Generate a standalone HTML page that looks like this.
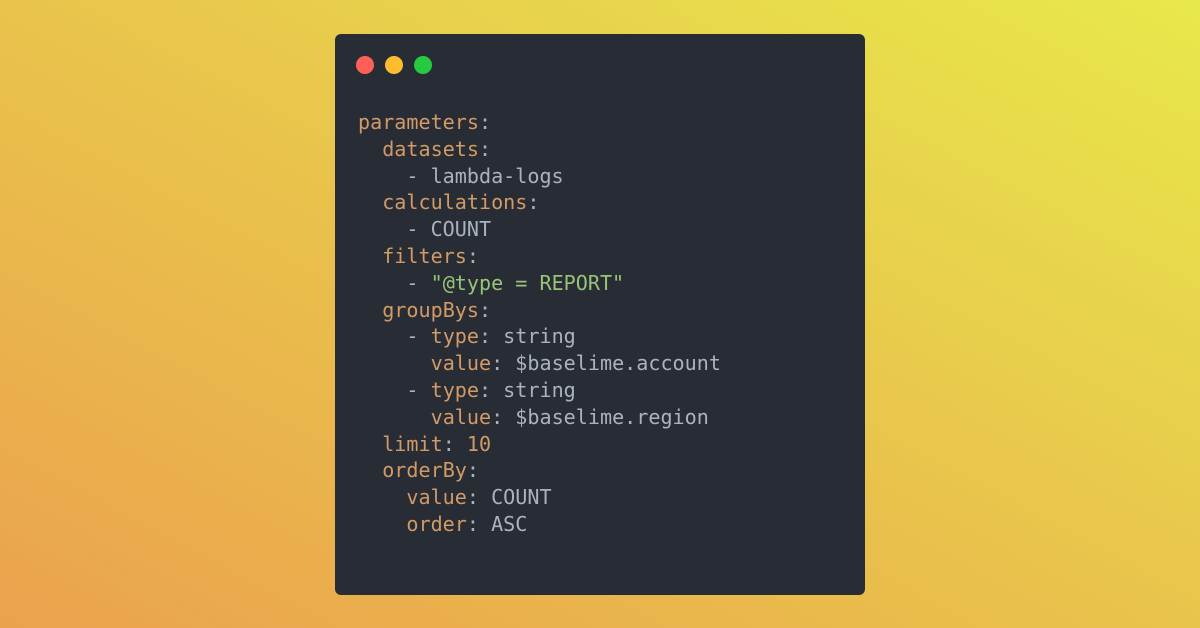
<!DOCTYPE html>
<html><head><meta charset="utf-8"><style>
html,body{margin:0;padding:0}
body{width:1200px;height:628px;overflow:hidden;background:linear-gradient(28deg,#eba24d 0%,#e9c04c 45%,#e8e84b 100%);position:relative}
.win{position:absolute;left:335px;top:34px;width:530px;height:561px;background:#282c34;border-radius:6px}
.dot{position:absolute;top:22px;width:18px;height:18px;border-radius:50%}
pre{position:absolute;left:23px;top:75px;margin:0;font-family:"DejaVu Sans Mono","Liberation Mono",monospace;font-size:20.1px;line-height:26.8px;color:#abb2bf}
.k{color:#d19a66}.s{color:#98c379}
</style></head><body>
<div class="win">
<div class="dot" style="left:21px;background:#ff5f56"></div>
<div class="dot" style="left:50px;background:#ffbd2e"></div>
<div class="dot" style="left:79px;background:#27c93f"></div>
<pre><span class="k">parameters</span>:
  <span class="k">datasets</span>:
    - lambda-logs
  <span class="k">calculations</span>:
    - COUNT
  <span class="k">filters</span>:
    - <span class="s">"@type = REPORT"</span>
  <span class="k">groupBys</span>:
    - <span class="k">type</span>: string
      <span class="k">value</span>: $baselime.account
    - <span class="k">type</span>: string
      <span class="k">value</span>: $baselime.region
  <span class="k">limit</span>: <span class="k">10</span>
  <span class="k">orderBy</span>:
    <span class="k">value</span>: COUNT
    <span class="k">order</span>: ASC</pre>
</div>
</body></html>
